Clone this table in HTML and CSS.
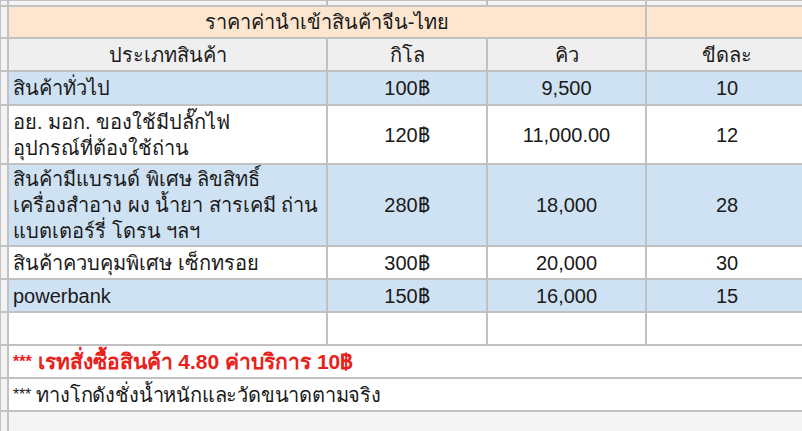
FILE: index.html
```html
<!DOCTYPE html>
<html lang="th">
<head>
<meta charset="utf-8">
<link rel="stylesheet" href="styles.css">
</head>
<body>
<table class="sheet">
  <colgroup>
    <col class="c-idx"><col class="c-name"><col class="c-kg"><col class="c-cbm"><col class="c-pcs">
  </colgroup>
  <tr class="r-top"><td class="idx"></td><td></td><td></td><td></td><td></td></tr>
  <tr class="r-title"><td class="idx"></td><td colspan="3" class="center">ราคาค่านำเข้าสินค้าจีน-ไทย</td><td></td></tr>
  <tr class="r-head"><td class="idx"></td><td class="center">ประเภทสินค้า</td><td class="center">กิโล</td><td class="center">คิว</td><td class="center">ขีดละ</td></tr>
  <tr class="r-first blue"><td class="idx"></td><td class="name">สินค้าทั่วไป</td><td class="center">100฿</td><td class="center">9,500</td><td class="center">10</td></tr>
  <tr class="r-2"><td class="idx"></td><td class="name">อย. มอก. ของใช้มีปลั๊กไฟ<br>อุปกรณ์ที่ต้องใช้ถ่าน</td><td class="center">120฿</td><td class="center">11,000.00</td><td class="center">12</td></tr>
  <tr class="r-3 blue"><td class="idx"></td><td class="name">สินค้ามีแบรนด์ พิเศษ ลิขสิทธิ์<br>เครื่องสำอาง ผง น้ำยา สารเคมี ถ่าน<br>แบตเตอร์รี่ โดรน ฯลฯ</td><td class="center">280฿</td><td class="center">18,000</td><td class="center">28</td></tr>
  <tr class="r-1"><td class="idx"></td><td class="name">สินค้าควบคุมพิเศษ เซ็กทรอย</td><td class="center">300฿</td><td class="center">20,000</td><td class="center">30</td></tr>
  <tr class="r-1 blue"><td class="idx"></td><td class="name">powerbank</td><td class="center">150฿</td><td class="center">16,000</td><td class="center">15</td></tr>
  <tr class="r-1"><td class="idx"></td><td></td><td></td><td></td><td></td></tr>
  <tr class="r-1"><td class="idx"></td><td colspan="4" class="name note-red"><span class="stars">***</span> เรทสั่งซื้อสินค้า 4.80 ค่าบริการ 10฿</td></tr>
  <tr class="r-1"><td class="idx"></td><td colspan="4" class="name note"><span class="stars">***</span> ทางโกดังชั่งน้ำหนักและวัดขนาดตามจริง</td></tr>
  <tr class="r-bottom"><td class="idx"></td><td colspan="4"></td></tr>
</table>
</body>
</html>
```

FILE: styles.css
```css
html, body {
  margin: 0;
  padding: 0;
  background: #ffffff;
  overflow: hidden;
  width: 802px;
  height: 431px;
}

.sheet {
  border-collapse: collapse;
  table-layout: fixed;
  width: 808px;
  font-family: "Liberation Sans", Arial, sans-serif;
  font-size: 20px;
  color: #1a1a1a;
  margin-top: -1px;
  margin-left: -1px;
}

.c-idx { width: 8px; }
.c-name { width: 319px; }
.c-kg { width: 160px; }
.c-cbm { width: 159px; }
.c-pcs { width: 162px; }

.sheet td {
  border: 2px solid #c1c1c1;
  padding: 0 4px;
  white-space: nowrap;
  overflow: hidden;
  line-height: 26px;
  vertical-align: middle;
}

.sheet td.idx {
  background: #f3f3f3;
  padding: 0;
}

.r-top td { height: 4px; background: #f3f3f3; padding: 0; line-height: 0; font-size: 0; }
.r-title td { height: 30px; background: #fde6d0; }
.r-head td { height: 31px; background: #efefef; }
.r-first td { height: 32px; }
.r-1 td { height: 31px; }
.r-2 td { height: 57px; }
.r-3 td { height: 80px; }
.r-bottom td { height: 20px; background: #f4f4f4; }

.blue td { background: #cfe2f3; }
.sheet tr td.idx { background: #f3f3f3; }

.center { text-align: center; }
.name { text-align: left; padding-left: 6px; }

.note-red {
  color: #e8211b;
  font-weight: bold;
  font-size: 21px;
}

.note {
  letter-spacing: -0.2px;
}

.stars {
  font-size: 16px;
  vertical-align: 2px;
}
```
